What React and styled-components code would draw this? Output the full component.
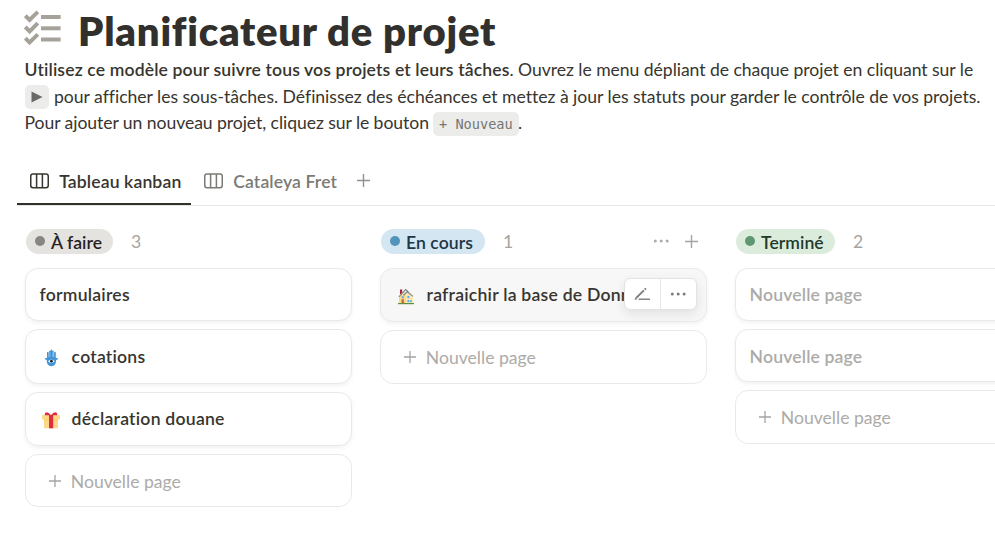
import React from 'react';
import styled, { createGlobalStyle } from 'styled-components';

const GlobalStyle = createGlobalStyle`
  * { box-sizing: border-box; }
  html, body { margin: 0; overflow: hidden; background: #fff; }
  body {
    font-family: Lato, sans-serif;
    font-size: 17.6px;
    font-variant-ligatures: none;
    color: #37352f;
  }
  svg { display: block; flex: none; }
`;

const Page = styled.main`
  width: 995px;
  height: 558px;
  overflow: hidden;
  white-space: nowrap;
`;
const TitleRow = styled.header`
  display: flex;
  align-items: flex-start;
  height: 57px;
  padding: 10px 0 0 24px;
`;
const Title = styled.h1`
  margin: -3px 0 0 16px;
  font-size: 40px;
  line-height: 48px;
  font-weight: 800;
  letter-spacing: 0.76px;
  color: #32302c;
`;
const Intro = styled.section`
  height: 108px;
  padding-left: 24.5px;
`;
const IntroLine = styled.p`
  display: flex;
  align-items: center;
  margin: 0;
  height: 26.5px;
  line-height: 26px;
`;
const Run = styled.span`
  letter-spacing: ${(p) => p.$spacing || 0}px;
  white-space: pre;
`;
const Strong = styled.strong`
  font-weight: 600;
  letter-spacing: 0.13px;
`;
const Code = styled.code`
  display: flex;
  align-items: center;
  justify-content: center;
  width: ${(p) => p.$width}px;
  height: 24px;
  margin: ${(p) => p.$margin};
  border-radius: 5px;
  background: #ececeb;
  color: #767571;
  font: 13.6px/24px "DejaVu Sans Mono", monospace;
`;

const Tabs = styled.nav`
  display: flex;
  height: 41px;
  margin-left: 17px;
  border-bottom: 1px solid #e6e6e5;
`;
const Tab = styled.div`
  display: flex;
  align-items: center;
  gap: 10.5px;
  height: 40px;
  width: ${(p) => p.$width}px;
  padding: 0 0 6px 12.7px;
  border-bottom: 2px solid ${(p) => (p.$active ? '#32302c' : 'transparent')};
  color: ${(p) => (p.$active ? '#37352f' : '#7b7a76')};
  font-weight: 600;
  letter-spacing: 0.12px;
`;
const TabLabel = styled.span`
  line-height: 24px;
  padding-top: 1px;
`;
const AddTab = styled.div`
  padding: 8.5px 0 0 4.5px;
`;

const Board = styled.div`
  display: flex;
  gap: 28px;
  padding: 23px 0 0 25px;
`;
const Column = styled.section`
  flex: none;
  width: 327px;
`;
const ColumnHeader = styled.div`
  display: flex;
  align-items: center;
  height: 25px;
  margin-bottom: 14px;
  padding-left: 1px;
`;
const Pill = styled.div`
  display: flex;
  align-items: center;
  gap: 6px;
  width: ${(p) => p.$width}px;
  height: 25px;
  padding-left: 9px;
  border-radius: 13px;
  background: ${(p) => p.$bg};
  color: ${(p) => p.$color};
  font-weight: 600;
  letter-spacing: 0.05px;
`;
const Dot = styled.i`
  width: 10px;
  height: 10px;
  margin-bottom: 1px;
  border-radius: 50%;
  background: ${(p) => p.$color};
`;
const PillLabel = styled.span`
  padding-top: 2px;
  line-height: 23px;
`;
const Count = styled.span`
  width: 12px;
  margin-left: 17px;
  text-align: center;
  color: #a5a4a1;
`;
const HeaderActions = styled.div`
  display: flex;
  gap: 15px;
  margin: 0 9.5px 0 auto;
`;

const Card = styled.article`
  position: relative;
  display: flex;
  align-items: center;
  height: ${(p) => p.$height}px;
  margin-bottom: 8px;
  padding-left: 14px;
  border: 1px solid ${(p) => (p.$hover ? '#ebebea' : '#e9e9e8')};
  border-radius: 13px;
  background: ${(p) => (p.$hover ? '#f7f7f7' : '#fff')};
  box-shadow: 0 2px 4px rgba(15, 15, 15, 0.055);
  color: ${(p) => (p.$muted ? '#acaba8' : '#37352f')};
  font-weight: 600;
  letter-spacing: ${(p) => (p.$muted ? 0.14 : 0.23)}px;
`;
const CardIcon = styled.div`
  width: 32px;
  padding: 2px 0 0 2px;
`;
const CardTitle = styled.span`
  margin-left: -0.4px;
  padding-top: ${(p) => p.$padTop || 0}px;
  padding-bottom: ${(p) => p.$padBottom || 0}px;
`;
const NewCard = styled.div`
  display: flex;
  align-items: center;
  gap: 10px;
  height: ${(p) => p.$height}px;
  padding: 0 0 0 22.8px;
  border: 1px solid #e9e9e8;
  border-radius: 13px;
  color: #acaba8;
`;
const NewLabel = styled.span`
  padding-top: 1px;
`;
const Toolbar = styled.div`
  position: absolute;
  top: 9px;
  right: 9px;
  display: flex;
  width: 73px;
  height: 32px;
  border: 1px solid #e3e3e2;
  border-radius: 6px;
  background: #fff;
  box-shadow: 0 4px 12px rgba(15, 15, 15, 0.09);
`;
const ToolButton = styled.div`
  display: flex;
  flex: 1;
  align-items: center;
  justify-content: center;
  & + & { border-left: 1px solid #e6e6e5; }
`;

const Checklist = () => (
  <svg width="38" height="36" viewBox="0 0 38 36" fill="none" stroke="#a6a29a">
    {[0, 11.3, 22.5].map((y) => (
      <g key={y}>
        <path d={`M1.3 ${y + 5.7}l4.3 4.3 8.2-8.2`} strokeWidth="4" />
        <path d={`M17 ${y + 7}h19.6`} strokeWidth="4" />
      </g>
    ))}
  </svg>
);
const Plus = ({ size, color }) => (
  <svg width={size} height={size} viewBox="0 0 13 13" stroke={color} strokeWidth="1.4">
    <path d="M0 6.5h13M6.5 0v13" />
  </svg>
);
const Dots = ({ color }) => (
  <svg width="17" height="13" viewBox="0 0 17 13" fill={color}>
    <circle cx="2.3" cy="6" r="1.5" />
    <circle cx="8.2" cy="6" r="1.5" />
    <circle cx="14.1" cy="6" r="1.5" />
  </svg>
);
const BoardIcon = () => (
  <svg width="19" height="16" viewBox="0 0 19 16" fill="none" stroke="currentColor" strokeWidth="1.5">
    <rect x=".75" y="1" width="17.5" height="13.7" rx="2.2" />
    <path d="M6.6 1v13.7M12.4 1v13.7" />
  </svg>
);
const EditIcon = () => (
  <svg width="17" height="14" viewBox="0 0 17 14" fill="none" stroke="#7d7c78">
    <path d="M2 11.2L9.9 3.3M10.7 2.5l1.2-1.2" strokeWidth="1.9" />
    <path d="M4.6 12.2h11.4" strokeWidth="1.4" />
    <path d="M.6 13l.8-2.6 1.8 1.8z" fill="#7d7c78" stroke="none" />
  </svg>
);
const Triangle = () => (
  <svg width="12" height="12" viewBox="0 0 12 12" fill="#6b6a67">
    <path d="M.5.4L11.5 6 .5 11.6z" />
  </svg>
);
const House = () => (
  <svg width="18" height="18" viewBox="0 0 18 18">
    <path d="M2 10l4-5 7 0 3 5v6.5H2z" fill="#ffe8b6" />
    <path d="M2 10l4-4 3 4v6.5H2z" fill="#ffd983" />
    <path d="M3 2.5h2.2V6L3 7.5z" fill="#a5243d" />
    <path d="M1.8 9.8L8.7 2.6 11.5 5M6.5 8.5l3.6-3.7L16 9.4" fill="none" stroke="#78868e" strokeWidth="1.1" />
    <path d="M4.5 12.3h2.4v4.2H4.5z" fill="#c1694f" />
    <path d="M4.7 9.2h2v2h-2zM10.4 9h2v2.2h-2zM10.4 13h2v2.2h-2zM13.2 13h1.5v2.2h-1.5z" fill="#55acee" />
    <path d="M1 16h16v1.2H1z" fill="#5c913b" />
  </svg>
);
const Hamsa = () => (
  <svg width="18" height="18" viewBox="0 0 18 18">
    <path d="M5 3.5q.8-1.3 1.7 0V8h.5V2q.9-1 1.5 0V1q.7-.9 1.4 0v1q.9-1 1.5 0v6h.5V3.5q.9-1.3 1.7 0V9l2.4.2q-.4 1.5-2 1.7Q13.9 17 9.4 17.2 4.9 17 4.6 10.9q-1.6-.2-2-1.7L5 9z" fill="#4295d8" />
    <path d="M8.2 3v5M10.5 3v5" stroke="#73b8ee" strokeWidth=".6" />
    <path d="M6 12.2q3.4-3.2 6.8 0-3.4 3.2-6.8 0z" fill="#eef7ff" />
    <circle cx="9.4" cy="12.2" r="1.4" fill="#1e2a37" />
  </svg>
);
const Gift = () => (
  <svg width="18" height="18" viewBox="0 0 18 18">
    <path d="M2 7h14v9.4q0 .9-.9.9H2.9q-.9 0-.9-.9z" fill="#fdd888" />
    <path d="M0 5q0-1 1-1h16q1 0 1 1v2.5q0 1-1 1H1q-1 0-1-1z" fill="#fdd888" />
    <path d="M2 8.5h14v1H2z" fill="#ffcc4d" />
    <path d="M7 4h4.2v13.3H7z" fill="#dd2e44" />
    <path d="M9 4.3Q6 .2 3.2 1.7 2.3 4 3 4.3h12q.7-.5-.2-2.6Q12 .2 9 4.3z" fill="#dd2e44" />
  </svg>
);

const columns = [
  {
    name: 'À faire', count: 3, width: 87, bg: '#e5e3df', color: '#24221e', dot: '#888682', addHeight: 53,
    cards: [
      { title: 'formulaires', height: 53 },
      { title: 'cotations', height: 55, icon: <Hamsa /> },
      { title: 'déclaration douane', height: 54, icon: <Gift />, padBottom: 2 },
    ],
  },
  {
    name: 'En cours', count: 1, width: 104, bg: '#d3e6f2', color: '#203548', dot: '#5394bd', addHeight: 54, actions: true,
    cards: [{ title: 'rafraichir la base de Donn', height: 54, icon: <House />, hover: true, padBottom: 2 }],
  },
  {
    name: 'Terminé', count: 2, width: 99, bg: '#dbecdd', color: '#21392b', dot: '#5e9772', addHeight: 54,
    cards: [
      { title: 'Nouvelle page', height: 53, muted: true },
      { title: 'Nouvelle page', height: 53, muted: true, padTop: 2 },
    ],
  },
];

export default function App() {
  return (
    <Page>
      <GlobalStyle />
      <TitleRow>
        <Checklist />
        <Title>Planificateur de projet</Title>
      </TitleRow>
      <Intro>
        <IntroLine>
          <Strong>Utilisez ce modèle pour suivre tous vos projets et leurs tâches</Strong>
          <Run $spacing={-0.05}>. Ouvrez le menu dépliant de chaque projet en cliquant sur le</Run>
        </IntroLine>
        <IntroLine>
          <Code $width={24} $margin="1px 5px 0 0.5px"><Triangle /></Code>
          <Run $spacing={-0.025}>pour afficher les sous-tâches. Définissez des échéances et mettez à jour les statuts pour garder le contrôle de vos projets.</Run>
        </IntroLine>
        <IntroLine>
          <Run $spacing={-0.07}>Pour ajouter un nouveau projet, cliquez sur le bouton</Run>
          <Code $width={86} $margin="1px -1px 0 4px">+ Nouveau</Code>
          <Run>.</Run>
        </IntroLine>
      </Intro>
      <Tabs>
        <Tab $active $width={174}><BoardIcon /><TabLabel>Tableau kanban</TabLabel></Tab>
        <Tab $width={161}><BoardIcon /><TabLabel>Cataleya Fret</TabLabel></Tab>
        <AddTab><Plus size={13} color="#92918d" /></AddTab>
      </Tabs>
      <Board>
        {columns.map((col) => (
          <Column key={col.name}>
            <ColumnHeader>
              <Pill $width={col.width} $bg={col.bg} $color={col.color}>
                <Dot $color={col.dot} />
                <PillLabel>{col.name}</PillLabel>
              </Pill>
              <Count>{col.count}</Count>
              {col.actions && (
                <HeaderActions><Dots color="#acaba8" /><Plus size={13} color="#a5a4a1" /></HeaderActions>
              )}
            </ColumnHeader>
            {col.cards.map((card, i) => (
              <Card key={i} $height={card.height} $hover={card.hover} $muted={card.muted}>
                {card.icon && <CardIcon>{card.icon}</CardIcon>}
                <CardTitle $padTop={card.padTop} $padBottom={card.padBottom}>{card.title}</CardTitle>
                {card.hover && (
                  <Toolbar>
                    <ToolButton><EditIcon /></ToolButton>
                    <ToolButton><Dots color="#7d7c78" /></ToolButton>
                  </Toolbar>
                )}
              </Card>
            ))}
            <NewCard $height={col.addHeight}>
              <Plus size={12} color="#a5a4a1" />
              <NewLabel>Nouvelle page</NewLabel>
            </NewCard>
          </Column>
        ))}
      </Board>
    </Page>
  );
}
